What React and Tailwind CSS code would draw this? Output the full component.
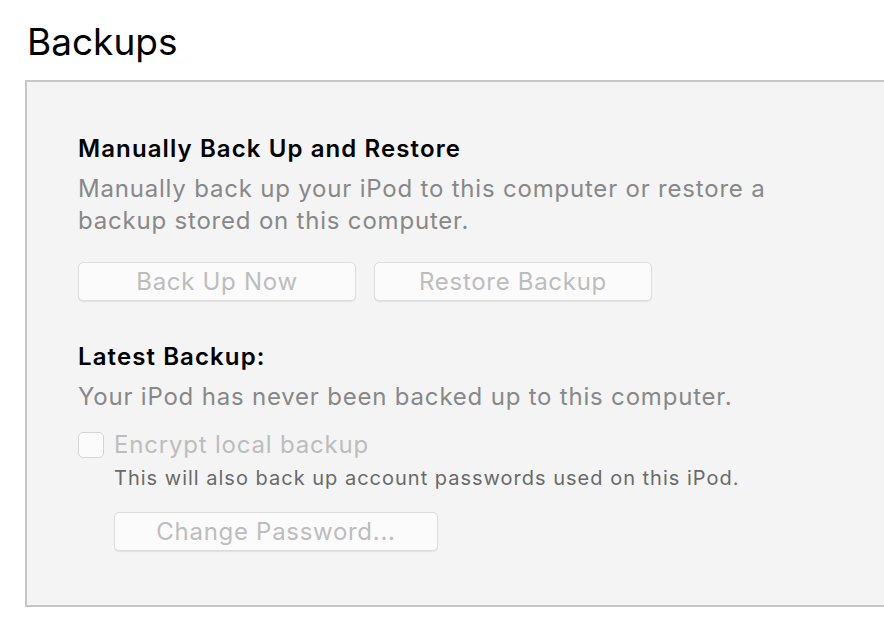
export default function App() {
  const font = { fontFamily: 'Inter, "Liberation Sans", sans-serif' };
  return (
    <div className="w-[884px] h-[630px] bg-white overflow-hidden" style={font}>
      <h1 className="pl-[27px] pt-[20px] h-[80px] text-[37px] leading-[44px] text-black">Backups</h1>
      <div className="ml-[25px] w-[880px] h-[527px] bg-[#f4f4f4] border-t-2 border-l-2 border-b-2 border-[#c6c6c6] pl-[51px] pt-[52px]">
        <h2 className="text-[24px] leading-[30px] font-semibold text-black tracking-[1.1px]">Manually Back Up and Restore</h2>
        <p className="mt-[9px] text-[24px] leading-[32px] text-[#888888] w-[700px] tracking-[0.8px]">
          Manually back up your iPod to this computer or restore a backup stored on this computer.
        </p>
        <div className="flex gap-[18px] mt-[25px]">
          <button className="w-[278px] h-[39px] rounded-[5px] bg-[#fbfbfb] border border-[#dcdcdc] shadow-[0_1px_1px_rgba(0,0,0,0.08)] text-[24px] tracking-[0.7px] text-[#bdbdbd]">Back Up Now</button>
          <button className="w-[278px] h-[39px] rounded-[5px] bg-[#fbfbfb] border border-[#dcdcdc] shadow-[0_1px_1px_rgba(0,0,0,0.08)] text-[24px] tracking-[0.7px] text-[#bdbdbd]">Restore Backup</button>
        </div>
        <h2 className="mt-[41px] text-[24px] leading-[30px] font-semibold text-black tracking-[1.1px]">Latest Backup:</h2>
        <p className="mt-[9px] text-[24px] leading-[32px] text-[#888888] tracking-[0.8px]">Your iPod has never been backed up to this computer.</p>
        <div className="flex items-center gap-[10px] mt-[17px]">
          <div className="w-[26px] h-[26px] rounded-[5px] border border-[#d4d4d4] bg-[#fbfbfb]" />
          <span className="text-[24px] leading-[30px] text-[#bdbdbd] tracking-[0.8px]">Encrypt local backup</span>
        </div>
        <p className="ml-[36px] mt-[4px] text-[20px] leading-[28px] text-[#6a6a6a] tracking-[1px]">This will also back up account passwords used on this iPod.</p>
        <button className="ml-[36px] mt-[20px] w-[324px] h-[39px] rounded-[5px] bg-[#fbfbfb] border border-[#dcdcdc] shadow-[0_1px_1px_rgba(0,0,0,0.08)] text-[24px] tracking-[0.7px] text-[#bdbdbd]">Change Password...</button>
      </div>
    </div>
  );
}
